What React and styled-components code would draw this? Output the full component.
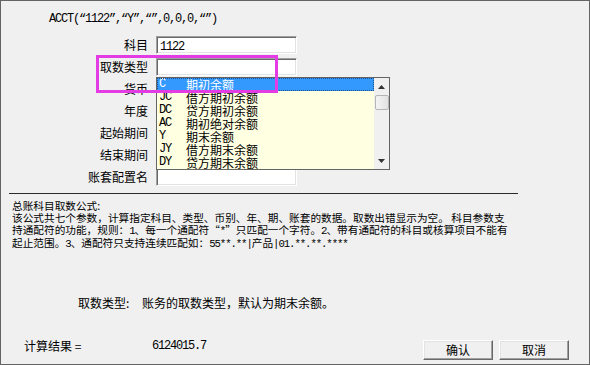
import React from "react";
import styled, { createGlobalStyle } from "styled-components";

const Global = createGlobalStyle`
  html, body { margin: 0; padding: 0; background: #f0f0f0; }
  #root { width: 590px; height: 365px; }
`;

const Window = styled.div`
  position: relative;
  width: 590px;
  height: 365px;
  box-sizing: border-box;
  border: 1px solid #646464;
  background: #f0f0f0;
  font-family: "Noto Sans CJK SC", sans-serif;
  font-size: 12px;
  color: #000;
  display: flex;
  flex-direction: column;
  overflow: hidden;
`;

const Asc = styled.span`
  font-family: "Liberation Mono", monospace;
  font-size: 12px;
  letter-spacing: -1.2px;
`;

const Title = styled.div`
  margin: 9px 0 0 48px;
  height: 14px;
  line-height: 14px;
  white-space: nowrap;
`;

const Form = styled.div`
  margin-top: 12px;
  display: grid;
  grid-template-columns: 147px 141px;
  column-gap: 8px;
  row-gap: 4px;
`;

const Label = styled.div`
  height: 18px;
  line-height: 18px;
  text-align: right;
  white-space: nowrap;
`;

const Input = styled.div`
  height: 18px;
  box-sizing: border-box;
  background: #fff;
  border-style: solid;
  border-width: 1px;
  border-color: #a0a0a0 #ffffff #ffffff #a0a0a0;
  box-shadow: inset 1px 1px 0 #696969, inset -1px -1px 0 #e3e3e3;
  padding: 0 0 0 3px;
  line-height: 16px;
`;

const Separator = styled.div`
  margin: 7px 0 0 8px;
  width: 509px;
  height: 1px;
  background: #2a2a2a;
`;

const Desc = styled.div`
  margin: 6px 0 0 11px;
  font-size: 10.67px;
  line-height: 12px;
  white-space: nowrap;
`;

const DescAsc = styled.span`
  font-family: "Liberation Mono", monospace;
  font-size: 10.67px;
  letter-spacing: -1.07px;
`;

const Note = styled.div`
  margin: 46px 0 0 77px;
  height: 14px;
  line-height: 14px;
  white-space: nowrap;
`;

const NoteKey = styled.span`
  display: inline-block;
  width: 64px;
`;

const Footer = styled.div`
  margin-top: 30px;
  display: flex;
  align-items: flex-start;
`;

const Result = styled.div`
  margin: -1px 0 0 23px;
  display: flex;
  height: 14px;
  line-height: 14px;
  white-space: nowrap;
`;

const ResultKey = styled.span`
  width: 128px;
`;

const Buttons = styled.div`
  margin: 0 20px 0 auto;
  display: flex;
  gap: 6px;
`;

const Button = styled.button`
  width: 70px;
  height: 20px;
  box-sizing: border-box;
  padding: 0;
  font-family: "Noto Sans CJK SC", sans-serif;
  font-size: 12px;
  color: #000;
  background: #f0f0f0;
  border-style: solid;
  border-width: 1px;
  border-color: #ffffff #696969 #696969 #ffffff;
  box-shadow: inset -1px -1px 0 #a0a0a0, inset 1px 1px 0 #e3e3e3;
  line-height: 18px;
`;

const Dropdown = styled.div`
  position: absolute;
  left: 155px;
  top: 76px;
  width: 234px;
  height: 93px;
  box-sizing: border-box;
  border: 1px solid #646464;
  background: #ffffe1;
  display: flex;
`;

const List = styled.div`
  flex: 1;
  display: flex;
  flex-direction: column;
`;

const Row = styled.div`
  height: 13px;
  flex: none;
  box-sizing: border-box;
  display: flex;
  align-items: center;
  padding-left: 2px;
  white-space: nowrap;
  line-height: 13px;
  background: ${(p) => (p.$active ? "#3399ff" : "transparent")};
  color: ${(p) => (p.$active ? "#fff" : "#000")};
  outline: ${(p) => (p.$active ? "1px dotted #1d4f86" : "none")};
  outline-offset: -1px;
`;

const Code = styled.span`
  width: 27px;
  flex: none;
  font-family: "Liberation Mono", monospace;
  font-size: 12px;
  letter-spacing: -1.2px;
`;

const Scrollbar = styled.div`
  width: 15px;
  background: #f0f0f0;
  display: flex;
  flex-direction: column;
  align-items: center;
`;

const Arrow = styled.div`
  height: 17px;
  width: 15px;
  display: flex;
  align-items: center;
  justify-content: center;
`;

const Thumb = styled.div`
  width: 14px;
  height: 15px;
  box-sizing: border-box;
  border: 1px solid #b5b5b5;
  border-radius: 2px;
  background: linear-gradient(to right, #f4f4f4, #e2e2e2);
`;

const Track = styled.div`
  flex: 1;
`;

const Highlight = styled.div`
  position: absolute;
  left: 95px;
  top: 54px;
  width: 182px;
  height: 38px;
  box-sizing: border-box;
  border: 3px solid #e43ce4;
  pointer-events: none;
`;

const TriUp = () => (
  <svg width="7" height="4" viewBox="0 0 7 4">
    <path d="M0 4 L3.5 0 L7 4 Z" fill="#333" />
  </svg>
);
const TriDown = () => (
  <svg width="7" height="4" viewBox="0 0 7 4">
    <path d="M0 0 L3.5 4 L7 0 Z" fill="#333" />
  </svg>
);

const fields = [
  ["科目", "1122"],
  ["取数类型", ""],
  ["货币", ""],
  ["年度", ""],
  ["起始期间", ""],
  ["结束期间", ""],
  ["账套配置名", ""],
];

const options = [
  ["C", "期初余额"],
  ["JC", "借方期初余额"],
  ["DC", "贷方期初余额"],
  ["AC", "期初绝对余额"],
  ["Y", "期末余额"],
  ["JY", "借方期末余额"],
  ["DY", "贷方期末余额"],
];

export default function App() {
  return (
    <>
      <Global />
      <Window>
        <Title>
          <Asc>ACCT(“1122”,“Y”,“”,0,0,0,“”)</Asc>
        </Title>
        <Form>
          {fields.map(([label, value]) => (
            <React.Fragment key={label}>
              <Label>{label}</Label>
              <Input>{value && <Asc>{value}</Asc>}</Input>
            </React.Fragment>
          ))}
        </Form>
        <Separator />
        <Desc>
          总账科目取数公式:
          <br />
          该公式共七个参数，计算指定科目、类型、币别、年、期、账套的数据。取数出错显示为空。 科目参数支
          <br />
          持通配符的功能，规则：<DescAsc>1</DescAsc>、每一个通配符“<DescAsc>*</DescAsc>”只匹配一个字符。<DescAsc>2</DescAsc>、带有通配符的科目或核算项目不能有
          <br />
          起止范围。<DescAsc>3</DescAsc>、通配符只支持连续匹配如：<DescAsc>55**.**|</DescAsc>产品<DescAsc>|01.**.**.****</DescAsc>
        </Desc>
        <Note>
          <NoteKey>取数类型:</NoteKey>账务的取数类型，默认为期末余额。
        </Note>
        <Footer>
          <Result>
            <ResultKey>计算结果 =</ResultKey>
            <Asc>6124015.7</Asc>
          </Result>
          <Buttons>
            <Button>确认</Button>
            <Button>取消</Button>
          </Buttons>
        </Footer>

        <Dropdown>
          <List>
            {options.map(([code, name], i) => (
              <Row key={code} $active={i === 0}>
                <Code>{code}</Code>
                {name}
              </Row>
            ))}
          </List>
          <Scrollbar>
            <Arrow>
              <TriUp />
            </Arrow>
            <Thumb />
            <Track />
            <Arrow>
              <TriDown />
            </Arrow>
          </Scrollbar>
        </Dropdown>
        <Highlight />
      </Window>
    </>
  );
}
